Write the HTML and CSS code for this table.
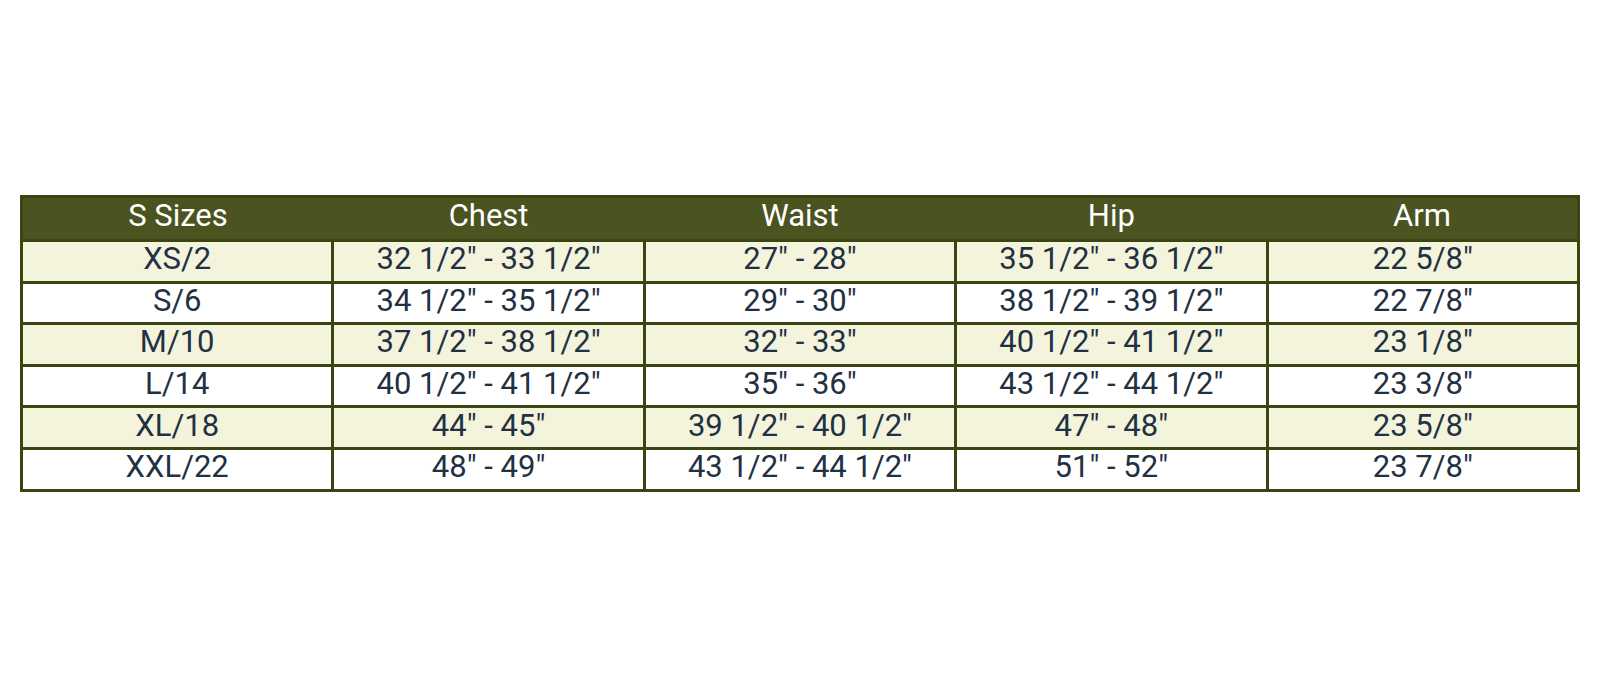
FILE: index.html
```html
<!DOCTYPE html>
<html lang="en">
<head>
<meta charset="utf-8">
<title>S Sizes</title>
<link rel="stylesheet" href="styles.css">
</head>
<body>
<div class="page">
  <table class="sizes">
    <thead>
      <tr><th>S Sizes</th><th>Chest</th><th>Waist</th><th>Hip</th><th>Arm</th></tr>
    </thead>
    <tbody>
      <tr class="alt"><td>XS/2</td><td>32 1/2" - 33 1/2"</td><td>27" - 28"</td><td>35 1/2" - 36 1/2"</td><td>22 5/8"</td></tr>
      <tr><td>S/6</td><td>34 1/2" - 35 1/2"</td><td>29" - 30"</td><td>38 1/2" - 39 1/2"</td><td>22 7/8"</td></tr>
      <tr class="alt"><td>M/10</td><td>37 1/2" - 38 1/2"</td><td>32" - 33"</td><td>40 1/2" - 41 1/2"</td><td>23 1/8"</td></tr>
      <tr><td>L/14</td><td>40 1/2" - 41 1/2"</td><td>35" - 36"</td><td>43 1/2" - 44 1/2"</td><td>23 3/8"</td></tr>
      <tr class="alt"><td>XL/18</td><td>44" - 45"</td><td>39 1/2" - 40 1/2"</td><td>47" - 48"</td><td>23 5/8"</td></tr>
      <tr><td>XXL/22</td><td>48" - 49"</td><td>43 1/2" - 44 1/2"</td><td>51" - 52"</td><td>23 7/8"</td></tr>
    </tbody>
  </table>
</div>
</body>
</html>
```
FILE: styles.css
```css
html, body {
  margin: 0;
  padding: 0;
  background: #ffffff;
}
.page {
  padding: 195px 20px 0 20px;
}
.sizes {
  width: 1560px;
  border-collapse: collapse;
  table-layout: fixed;
  font-family: Roboto, "Open Sans", sans-serif;
  font-size: 31px;
  color: #1f3142;
  border: 3px solid #3b4512;
}
.sizes th {
  background: #4b5320;
  color: #ffffff;
  font-weight: 400;
  height: 35px;
  padding: 0 0 6px 0;
  line-height: 30px;
  text-align: center;
}
.sizes td {
  border: 3px solid #3b4512;
  height: 34.6px;
  padding: 0 0 4px 0;
  line-height: 30px;
  text-align: center;
  background: #ffffff;
}
.sizes tr.alt td {
  background: #f4f4dc;
}
```
